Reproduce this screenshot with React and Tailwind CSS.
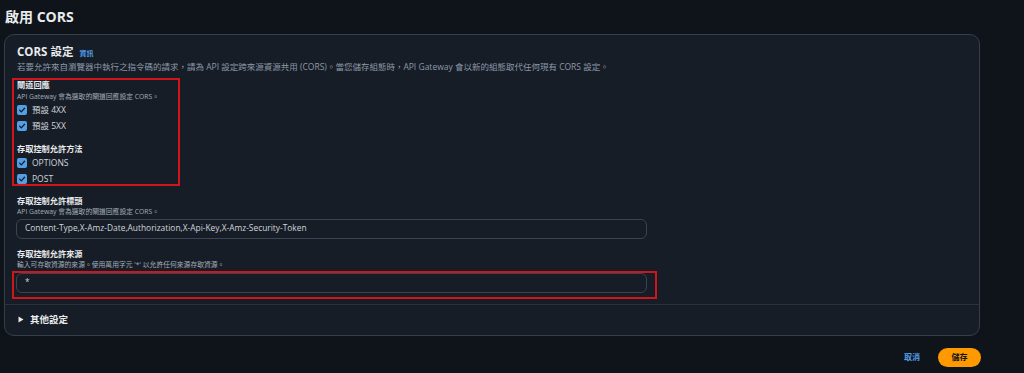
const font = { fontFamily: '"Open Sans", "Noto Sans CJK TC", sans-serif' };

const CheckIcon = () => (
  <span className="flex h-[10px] w-[10px] shrink-0 items-center justify-center rounded-[2px] bg-[#539fe5]">
    <svg width="8" height="8" viewBox="0 0 10 10" fill="none">
      <path d="M2 5.2 L4.1 7.3 L8.2 2.8" stroke="#0f1b2a" strokeWidth="1.6" strokeLinecap="round" strokeLinejoin="round" />
    </svg>
  </span>
);

const CheckRow = ({ label, className }) => (
  <div className={`flex h-[10px] items-center gap-[5px] ${className}`}>
    <CheckIcon />
    <span className="text-[8.5px] leading-[10px] text-[#d1d5db]">{label}</span>
  </div>
);

const FieldLabel = ({ children, className = "" }) => (
  <p className={`text-[8.2px] font-bold leading-[10px] text-[#e9ebed] ${className}`}>{children}</p>
);

const FieldHint = ({ children, className = "" }) => (
  <p className={`text-[6.8px] leading-[10px] text-[#a4adb8] ${className}`}>{children}</p>
);

const TextBox = ({ value, className = "" }) => (
  <div className={`flex h-[20px] w-[631px] items-center rounded-[6px] border border-[#3b4450] bg-[#161d26] pl-[8px] text-[8.4px] text-[#d1d5db] ${className}`}>
    {value}
  </div>
);

export default function App() {
  return (
    <div style={font} className="h-[373px] w-[1024px] overflow-hidden bg-[#0f141a] pt-[8px]">
      <h1 className="pl-[5px] text-[14px] font-bold leading-[18px] text-[#e9ebed]">啟用 CORS</h1>

      <div className="ml-[4px] mt-[8px] w-[976px] rounded-[10px] border border-[#353e4a] bg-[#161d26]">
        <div className="px-[7px] pt-[10px]">
          <div className="flex items-baseline gap-[6px] pl-[5px]">
            <h2 className="text-[11.5px] font-bold leading-[14px] text-[#e9ebed]">CORS 設定</h2>
            <span className="text-[7px] font-bold text-[#539fe5]">資訊</span>
          </div>
          <p className="mt-[2px] pl-[5px] text-[8.5px] leading-[10px] text-[#8d99a8]">
            若要允許來自瀏覽器中執行之指令碼的請求，請為 API 設定跨來源資源共用 (CORS)。當您儲存組態時，API Gateway 會以新的組態取代任何現有 CORS 設定。
          </p>

          {/* gateway responses + methods */}
          <div className="mt-[6px] w-[168px] border-2 border-[#d0161b] pl-[3px]">
            <FieldLabel>閘道回應</FieldLabel>
            <FieldHint className="mt-[2px]">API Gateway 會為選取的閘道回應設定 CORS。</FieldHint>
            <CheckRow label="預設 4XX" className="mt-[3px]" />
            <CheckRow label="預設 5XX" className="mt-[6px]" />
            <FieldLabel className="mt-[13px]">存取控制允許方法</FieldLabel>
            <CheckRow label="OPTIONS" className="mt-[4px]" />
            <CheckRow label="POST" className="mt-[6px]" />
          </div>

          <div className="pl-[5px]">
            <FieldLabel className="mt-[10px]">存取控制允許標頭</FieldLabel>
            <FieldHint className="mt-[1px]">API Gateway 會為選取的閘道回應設定 CORS。</FieldHint>
          </div>
          <TextBox className="ml-[4px] mt-[2px]" value="Content-Type,X-Amz-Date,Authorization,X-Api-Key,X-Amz-Security-Token" />

          <div className="pl-[5px]">
            <FieldLabel className="mt-[10px]">存取控制允許來源</FieldLabel>
            <FieldHint className="mt-[1px]">輸入可存取資源的來源。使用萬用字元 '*' 以允許任何來源存取資源。</FieldHint>
          </div>
          <div className="mt-[1px] h-[28px] w-[645px] border-2 border-[#d0161b] pl-[2px]">
            <TextBox value="*" />
          </div>
        </div>

        <div className="mt-[5px] border-t border-[#2a323d]" />

        <div className="flex items-center gap-[6px] pb-[9px] pl-[13px] pt-[9px]">
          <svg width="6" height="7" viewBox="0 0 6 7">
            <path d="M0.5 0.5 L5.5 3.5 L0.5 6.5 Z" fill="#e9ebed" />
          </svg>
          <span className="text-[9.5px] font-bold leading-[12px] text-[#e9ebed]">其他設定</span>
        </div>
      </div>

      <div className="mt-[12px] flex items-center justify-end gap-[18px] pr-[43px]">
        <button className="text-[8px] font-bold text-[#539fe5]">取消</button>
        <button className="flex h-[19px] w-[43px] items-center justify-center rounded-full bg-[#ff9900] text-[8px] font-bold text-[#0f141a]">
          儲存
        </button>
      </div>
    </div>
  );
}
